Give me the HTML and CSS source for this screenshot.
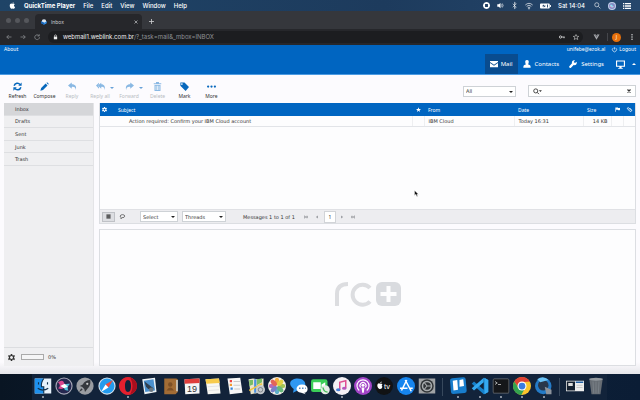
FILE: index.html
```html
<!DOCTYPE html>
<html lang="en">
<head>
<meta charset="utf-8">
<title>Inbox</title>
<link rel="stylesheet" href="styles.css">
</head>
<body>
<header class="menubar">
  <svg class="apple" viewBox="0 0 24 24"><path d="M17 13c0-3 2-4 3-5-1.500-2-3.500-2.500-5-2.500S13 6.500 12 6.500 9.500 5.500 8 5.500C5 5.500 2.500 8 2.500 12.500S6 23 8.500 23c1.500 0 2-1 3.800-1s2.200 1 3.700 1c2.500 0 4-3.500 5-6-2.500-1-4-2.500-4-4zM15.500 1c-2 .3-4 2-3.700 4.500C14 5.500 15.800 3.500 15.500 1z"/></svg>
  <nav class="menus"><b>QuickTime Player</b><span>File</span><span>Edit</span><span>View</span><span>Window</span><span>Help</span></nav>
  <div class="status">
    <svg viewBox="0 0 24 24"><path fill-rule="evenodd" d="M12 0a12 12 0 1 0 .01 0zM8 7h8q1 0 1 1v8q0 1-1 1H8q-1 0-1-1V8q0-1 1-1z"/></svg>
    <svg viewBox="0 0 24 24"><path d="M1 8h5l6-5v18l-6-5H1z"/><path class="line" d="M15 8q3 4 0 8M18 5q6 7 0 14"/></svg>
    <svg viewBox="0 0 24 24"><path class="line" d="M6 6l12 12-6 5V1l6 5L6 18"/></svg>
    <svg class="wide" viewBox="0 0 24 24"><path class="line" d="M1 9q11-10 22 0M5 13q7-7 14 0M8.500 17q3.500-3 7 0"/><circle cx="12" cy="20" r="2"/></svg>
    <svg class="battery" viewBox="0 0 36 24"><path fill-rule="evenodd" d="M3 4h26q3 0 3 3v10q0 3-3 3H3q-3 0-3-3V7q0-3 3-3zM13 7l-7 6h6v4l8-6h-6zM23 7v10h3V7z"/><path d="M33 9h3v6h-3z"/></svg>
    <time>Sat 14:04</time>
    <svg class="search-glass" viewBox="0 0 24 24"><path class="line" d="M15 15l7 7"/><circle class="line" cx="9.500" cy="9.500" r="7"/></svg>
    <svg class="wide" viewBox="0 0 24 24"><circle cx="12" cy="12" r="12" fill="#c3cfea"/><circle cx="12" cy="12" r="9" fill="#7f8cc4"/><path d="M4 13q5-8 8-2t8-2q-2 9-8 8t-8-4z" fill="#dc9fce"/><path d="M6 9q6-5 10 6-7 2-10-6z" fill="#8de0f1"/></svg>
    <svg class="wide" viewBox="0 0 24 24"><path d="M0 3h4v4H0zM6 3h18v4H6zM0 10h4v4H0zM6 10h18v4H6zM0 17h4v4H0zM6 17h18v4H6z"/></svg>
  </div>
</header>

<div class="tabstrip">
  <div class="lights"><i></i><i></i><i></i></div>
  <div class="tab">
    <svg viewBox="0 0 24 24"><circle cx="12" cy="10" r="9" fill="#dfe7f0"/><path d="M1 9l11 6 11-6v8l-11 6-11-6z" fill="#2f8ce4"/><path d="M1 9l11 6v8L1 17z" fill="#1763b5"/></svg>
    <span>Inbox</span>
    <button class="plain" aria-label="Close tab"><svg viewBox="0 0 24 24"><path class="heavy" d="M3 3l18 18M21 3L3 21"/></svg></button>
  </div>
  <button class="plain new" aria-label="New tab"><svg viewBox="0 0 24 24"><path class="heavy" d="M12 0v24M0 12h24"/></svg></button>
</div>

<div class="urlbar">
  <button class="plain" aria-label="Back"><svg class="dim" viewBox="0 0 24 24"><path class="mid" d="M22 12H3M11 4l-8 8 8 8"/></svg></button>
  <button class="plain" aria-label="Forward"><svg class="dim" viewBox="0 0 24 24"><path class="mid" d="M2 12h19M13 4l8 8-8 8"/></svg></button>
  <button class="plain" aria-label="Reload"><svg class="dim" viewBox="0 0 24 24"><path class="mid" d="M20 7a9.500 9.500 0 1 0 2 6M21 1v7h-7"/></svg></button>
  <div class="address">
    <svg class="lock" viewBox="0 0 24 24"><path d="M4 10h16v13H4z"/><path class="mid" d="M7.500 11V6a4.500 4.500 0 0 1 9 0v5"/></svg>
    <span class="url">webmail1.weblink.com.br<span>/?_task=mail&amp;_mbox=INBOX</span></span>
    <svg viewBox="0 0 24 24"><circle class="mid" cx="6" cy="12" r="4.500"/><path class="mid" d="M11 12h12M20 12v5"/></svg>
    <svg viewBox="0 0 24 24"><path class="line" d="M12 2l3 7 8 .5-6 5 2 7.500-7-4-7 4 2-7.500-6-5L9 9z"/></svg>
  </div>
  <svg class="vue" viewBox="0 0 24 24"><path fill="#a7a9ad" d="M0 2h9l3 5 3-5h9L12 23z"/><path fill="#6d6f75" d="M5 2h4l3 5 3-5h4l-7 12z"/></svg>
  <i class="rule"></i>
  <span class="avatar">J</span>
  <svg class="kebab" viewBox="0 0 24 24"><circle cx="12" cy="3" r="3"/><circle cx="12" cy="12" r="3"/><circle cx="12" cy="21" r="3"/></svg>
</div>

<div class="top">
  <div class="topline"><a href="#">About</a><span class="user">unifebe@ezok.al</span>
    <a href="#" class="logout"><svg viewBox="0 0 24 24"><path class="mid" d="M7 4a10 10 0 1 0 10 0M12 1v11"/></svg>Logout</a></div>
  <nav class="tasks">
    <a class="on" href="#"><svg viewBox="0 0 24 24"><path d="M0 3h24v3l-12 8L0 6z"/><path d="M0 9l12 8 12-8v13H0z"/></svg>Mail</a>
    <a href="#"><svg viewBox="0 0 24 24"><path d="M12 0c5 0 6 4 5 8-.5 2-1.500 4-2 5l6 3q2 1 2 7H1q0-6 2-7l6-3C8 12 7 10 7 8c-1-4 0-8 5-8z"/></svg>Contacts</a>
    <a href="#"><svg viewBox="0 0 24 24"><path d="M23 5l-5 4-4-3 4-5c-6-2-11 3-9 9L1 19q-2 2 1 4t4 0l8-8c6 2 11-4 9-10z"/></svg>Settings</a>
    <a href="#" class="screen" aria-label="Screen"><svg viewBox="0 0 24 24"><path fill-rule="evenodd" d="M0 1h24v17H15v3h3v2H6v-2h3v-3H0zM3 4v11h18V4z"/></svg></a>
    <button class="plain up" aria-label="Collapse"></button>
  </nav>
</div>

<main class="mail">
  <div class="toolbar">
    <div class="tools">
      <button class="tool w27"><svg viewBox="0 0 24 24"><path class="heavy" d="M3 10a9 9 0 0 1 16-3M21 14a9 9 0 0 1-16 3"/><path d="M23 1v9h-9zM1 23v-9h9z"/></svg>Refresh</button>
      <button class="tool w27"><svg viewBox="0 0 24 24"><path d="M15 4l5 5L8 21l-7 2 2-7zM17 2q2-2 4 0l1 1q2 2 0 4z"/></svg>Compose</button>
      <button class="tool w28" disabled><svg viewBox="0 0 24 24"><path d="M10 1v5c10 0 13 6 11 15-1-6-4-9-11-8v5L0 9z"/></svg>Reply</button>
      <button class="tool w28" disabled><svg viewBox="0 0 24 24"><path d="M14 2v4c8 0 11 6 9 15-1-6-3-9-9-8v5L5 9z"/><path d="M8 2v4L5 9l3 4v5L0 9z"/></svg>Reply all</button>
      <i class="drop"></i>
      <button class="tool w28" disabled><svg viewBox="0 0 24 24"><path d="M14 1v5C4 6 1 12 3 21c1-6 4-9 11-8v5l10-9z"/></svg>Forward</button>
      <i class="drop"></i>
      <button class="tool w27" disabled><svg viewBox="0 0 24 24"><path fill-rule="evenodd" d="M2 3h6V0h8v3h6v3H2zM4 8h16v16H4zM7 10v11h2V10zm4 0v11h2V10zm4 0v11h2V10z"/></svg>Delete</button>
      <button class="tool w27"><svg viewBox="0 0 24 24"><path fill-rule="evenodd" d="M1 1h11l12 12-9 11L1 10zM5 3.500a2 2 0 1 0 .01 0z"/></svg>Mark</button>
      <button class="tool w27"><svg viewBox="0 0 24 24"><circle cx="3" cy="12" r="3"/><circle cx="12" cy="12" r="3"/><circle cx="21" cy="12" r="3"/></svg>More</button>
    </div>
    <span class="pick filter"><select aria-label="Filter"><option>All</option></select></span>
    <form class="search">
      <svg viewBox="0 0 30 24"><circle class="mid" cx="9" cy="10" r="7"/><path class="mid" d="M14 15l6 6"/><path d="M20 8h10l-5 6z"/></svg>
      <input type="text" aria-label="Search">
      <button type="button" class="plain" aria-label="Clear"><svg viewBox="0 0 24 24"><path class="bold" d="M3 3l18 18M21 3L3 21"/></svg></button>
    </form>
  </div>

  <div class="panes">
    <aside class="folders">
      <nav><a class="on" href="#">Inbox</a><a href="#">Drafts</a><a href="#">Sent</a><a href="#">Junk</a><a href="#">Trash</a></nav>
      <div class="quota">
        <svg viewBox="0 0 24 24"><path fill-rule="evenodd" d="M9.500 0h5l.5 4 3 1 3-2 3 4-3 3v4l3 3-3 4-3-2-3 1-.5 4h-5L9 20l-3-1-3 2-3-4 3-3v-4L0 7l3-4 3 2 3-1zM12 7a5 5 0 1 0 .01 0z"/></svg>
        <i></i><span>0%</span>
      </div>
    </aside>

    <section class="content">
      <div class="list">
        <table>
          <colgroup><col class="c-gear"><col><col class="c-icon"><col class="c-from"><col class="c-date"><col class="c-size"><col class="c-icon"><col class="c-icon"></colgroup>
          <thead><tr>
            <th><svg viewBox="0 0 24 24"><path fill-rule="evenodd" d="M9.500 0h5l.5 4 3 1 3-2 3 4-3 3v4l3 3-3 4-3-2-3 1-.5 4h-5L9 20l-3-1-3 2-3-4 3-3v-4L0 7l3-4 3 2 3-1zM12 8a4 4 0 1 0 .01 0z"/></svg></th>
            <th>Subject</th>
            <th><svg viewBox="0 0 24 24"><path d="M12 1l3 8 9 .5-7 5.500 2.500 8.500L12 18.500 4.500 23.500 7 15 0 9.500 9 9z"/></svg></th>
            <th>From</th><th>Date</th><th>Size</th>
            <th><svg viewBox="0 0 24 24"><path d="M1 2h3v21H1zM5 3q5-3 9 0t10 0v11q-5 3-10 0t-9 0z"/></svg></th>
            <th><svg viewBox="0 0 24 24"><path class="heavy" d="M19 16L8 4Q5 1 3 4t0 5l10 11q5 4 8 0t0-7l-8-8"/></svg></th>
          </tr></thead>
          <tbody><tr><td></td><td class="subject">Action required: Confirm your IBM Cloud account</td><td></td><td>IBM Cloud</td><td>Today 16:31</td><td class="size">14 KB</td><td></td><td></td></tr></tbody>
        </table>
        <div class="listfoot">
          <button class="view on" aria-label="List view"><svg viewBox="0 0 24 24"><path d="M2 2h20v5H2zM2 8h20v3H2zM2 12h20v4H2zM2 17h20v4H2z"/></svg></button>
          <button class="view" aria-label="Threads view"><svg viewBox="0 0 24 24"><path class="mid" d="M8 18l-3 5v-6Q1 15 1 10q1-7 11-7t11 7q0 8-15 8z"/></svg></button>
          <span class="pick sel"><select aria-label="Select"><option>Select</option></select></span>
          <span class="pick thr"><select aria-label="Threads"><option>Threads</option></select></span>
          <span class="count">Messages 1 to 1 of 1</span>
          <button class="plain page" aria-label="First page"><svg viewBox="0 0 24 24"><path d="M2 3h4v18H2zM14 3v18l-8-9zM22 3v18l-8-9z"/></svg></button>
          <button class="plain page" aria-label="Previous page"><svg viewBox="0 0 24 24"><path d="M17 3v18L6 12z"/></svg></button>
          <input class="pageno" type="text" value="1" aria-label="Page">
          <button class="plain page" aria-label="Next page"><svg viewBox="0 0 24 24"><path d="M7 3v18l11-9z"/></svg></button>
          <button class="plain page" aria-label="Last page"><svg viewBox="0 0 24 24"><path d="M18 3h4v18h-4zM10 3v18l8-9zM2 3v18l8-9z"/></svg></button>
        </div>
      </div>
      <div class="preview">
        <svg viewBox="0 0 66 26"><path d="M2 25V13Q2 3 13 3M35 7A10 10 0 1 0 35 20.500" fill="none" stroke="#dcdde0" stroke-width="4"/><rect x="41" y="1" width="25" height="24" rx="6" fill="#d9dbdf"/><path d="M53.500 5v16M45.500 13h16" stroke="#fdfdfe" stroke-width="4"/></svg>
      </div>
    </section>
  </div>
</main>

<footer class="desktop">
  <div class="dock">
    <span class="run"><svg viewBox="0 0 24 24"><path fill="#e7f1fa" d="M1 2h22v20H1z"/><path fill="#1e91ee" d="M1 2h12q-4 6-3 11h3v9H1z"/><path fill="none" stroke="#12314c" stroke-width="1.500" d="M6 7v3M18 7v3M5 15q7 5 14 0M13 2q-4 6-3 11h3v9"/></svg></span>
    <span><svg viewBox="0 0 24 24"><circle cx="12" cy="12" r="11.500" fill="#a8a9b8"/><circle cx="12" cy="12" r="10" fill="#262850"/><path fill="#d9478e" d="M4 7q8-6 9 5-2 6-9 3 5-3 0-8z"/><path fill="#54c5dd" d="M20 9q-8-1-8 4 0 6 6 5-3-4 2-9z"/><path fill="#fff" d="M7 12l6-3 4 4-5 2z"/></svg></span>
    <span><svg viewBox="0 0 24 24"><circle cx="12" cy="12" r="11.500" fill="#9a9da2"/><path fill="#35383d" d="M19 4q-7 0-10 6l-4 2 3 1 3 3 1 4 3-4q5-4 4-12zM7 15l-3 5 5-3z"/><circle cx="15" cy="9" r="1.500" fill="#ccc"/></svg></span>
    <span><svg viewBox="0 0 24 24"><circle cx="12" cy="12" r="11.500" fill="#d5e1eb"/><circle cx="12" cy="12" r="10" fill="#239bed"/><path fill="#f04b3a" d="M20 4l-6 10-4-4z"/><path fill="#fff" d="M4 20l6-10 4 4z"/></svg></span>
    <span class="run"><svg viewBox="0 0 24 24"><path fill="#e5202e" fill-rule="evenodd" d="M12 0a12 12 0 1 0 .01 0zM12 4c3 0 4 4 4 8s-1 8-4 8-4-4-4-8 1-8 4-8z"/><path fill="#a80f1e" d="M15 1c12 3 12 19 0 22q6-11 0-22z"/></svg></span>
    <span><svg viewBox="0 0 24 24"><path fill="#eef3f6" d="M3 3l17-2 2 19-16 3z"/><path fill="#4b90ce" d="M5 5l13-2 2 15-13 2z"/><path fill="#314050" d="M6 6l12 9-1 2-6-1-3-3z"/><circle cx="15" cy="17" r="3" fill="#6a7681"/></svg></span>
    <span><svg viewBox="0 0 24 24"><path fill="#a26c35" d="M3 2h16l2 1v17l-3 3H3z"/><path fill="#d3d8d8" d="M19 4h2v15h-2z"/><circle cx="11" cy="10" r="3" fill="#7d4f25"/><path fill="#7d4f25" d="M6 18q5-8 10 0z"/></svg></span>
    <span><svg viewBox="0 0 24 24"><path fill="#f6f6f6" d="M2 3l20-1v20L3 23z"/><path fill="#df3e3b" d="M2 3l20-1v6L2 9z"/><text x="12" y="20" text-anchor="middle" font-size="12" fill="#333">19</text></svg></span>
    <span><svg viewBox="0 0 24 24"><path fill="#f8f8f3" d="M2 3l18-1 2 20-17 1z"/><path fill="#f7cb4b" d="M2 3l18-1 1 6L3 9z"/><path stroke="#ddd" d="M5 13l15-1M6 18l14-1"/></svg></span>
    <span><svg viewBox="0 0 24 24"><path fill="#f7f7f7" d="M2 2l17-1 3 20-17 2z"/><path fill="#e44" d="M5 4h3v3H5z"/><path fill="#f29b2f" d="M5 9h3v3H5z"/><path fill="#3584d8" d="M6 14h3v3H6z"/><path stroke="#bbb" d="M10 6h9M10 11h9M11 16h8"/></svg></span>
    <span><svg viewBox="0 0 24 24"><path fill="#e9e4cc" d="M2 3l6-1 7 1 7-1v18l-17 3z"/><path fill="#79bd66" d="M3 4h5v6l-5 2zM13 3l7-1v5l-7 4z"/><path stroke="#4b91df" stroke-width="3" d="M11 3v18"/><path stroke="#f3c443" stroke-width="2" d="M3 18L20 9"/><circle cx="18" cy="17" r="6" fill="#c5c9cd"/><circle cx="18" cy="17" r="3" fill="none" stroke="#6b7177"/></svg></span>
    <span><svg viewBox="0 0 24 24"><circle cx="12" cy="12" r="12" fill="#f4f0e9"/><g opacity=".9"><ellipse cx="12" cy="6" rx="3" ry="5" fill="#f5a52a"/><ellipse cx="12" cy="18" rx="3" ry="5" fill="#4fa9c7"/><ellipse cx="6" cy="12" rx="5" ry="3" fill="#b45cb0"/><ellipse cx="18" cy="12" rx="5" ry="3" fill="#9bc045"/><g transform="rotate(45 12 12)"><ellipse cx="12" cy="6" rx="3" ry="5" fill="#e1ce34"/><ellipse cx="12" cy="18" rx="3" ry="5" fill="#6d76c4"/><ellipse cx="6" cy="12" rx="5" ry="3" fill="#e25748"/><ellipse cx="18" cy="12" rx="5" ry="3" fill="#58b170"/></g></g></svg></span>
    <span><svg viewBox="0 0 24 24"><path fill="#2f98f2" d="M10 2c14 0 14 16 0 16l-6 3 1-5C-4 9 1 2 10 2z"/><path fill="#fff" d="M16 10c10 0 9 11 3 11l2 2-6-2c-9-1-8-11 1-11z"/><path stroke="#538abf" stroke-width="2" d="M12 15h2M16 15h2M20 15h1"/></svg></span>
    <span><svg viewBox="0 0 24 24"><rect y="3" width="22" height="17" rx="3" fill="#3bce58"/><path fill="#fff" d="M3 7h10v9H3zM14 10l5-3v8l-5-2z"/><circle cx="19" cy="17" r="6" fill="#e5ebe6"/><path fill="none" stroke="#45bc5b" stroke-width="2" d="M16 14q1 6 6 6"/></svg></span>
    <span class="run"><svg viewBox="0 0 24 24"><circle cx="12" cy="12" r="12" fill="#f4f1f5"/><path fill="none" stroke="#df4e91" stroke-width="2" d="M9 17V7l8-2v10"/><ellipse cx="7" cy="17" rx="3" ry="2" fill="#497fd7"/><ellipse cx="15" cy="15" rx="3" ry="2" fill="#b556bf"/></svg></span>
    <span><svg viewBox="0 0 24 24"><circle cx="12" cy="12" r="12" fill="#a345c8"/><g fill="none" stroke="#fff" stroke-width="1.500"><path d="M7 18a8 8 0 1 1 10 0M9 14a4 4 0 1 1 6 0"/></g><circle cx="12" cy="11" r="2" fill="#fff"/><path fill="#fff" d="M10 14h4l-1 7h-2z"/></svg></span>
    <span><svg viewBox="0 0 24 24"><circle cx="12" cy="12" r="12" fill="#111214"/><path fill="#fff" d="M9 12q0-2 1-2-2-2-3-1-4-2-4 3 1 4 3 4h1q2 0 3-3zM7 8q0-2 2-2 0 2-2 2z"/><text x="16" y="16" text-anchor="middle" font-size="10" fill="#fff">tv</text></svg></span>
    <span><svg viewBox="0 0 24 24"><circle cx="12" cy="12" r="12" fill="#1685ef"/><path fill="none" stroke="#fff" stroke-width="2" d="M13 4L6 18M11 4l8 15M4 15h10M17 15h4"/></svg></span>
    <span><svg viewBox="0 0 24 24"><path fill="#a0a3a5" d="M1 2h22v20H1z"/><circle cx="12" cy="12" r="9" fill="#303437"/><circle cx="12" cy="12" r="6" fill="none" stroke="#a7abad" stroke-width="2"/><path stroke="#a7abad" stroke-width="1.500" d="M12 12h6M12 12l-4-5M12 12l-4 5"/></svg></span>
    <i></i>
    <span class="run"><svg viewBox="0 0 24 24"><rect x="2" y="1" width="21" height="21" rx="3" fill="#187dcc" transform="rotate(-5 12 12)"/><path fill="#fff" d="M5 5l6-1 1 13-6 1zM14 4l5-1 1 9-6 1z"/></svg></span>
    <span class="run"><svg viewBox="0 0 24 24"><path fill="#1680ca" d="M17 1l6 3v16l-6 3L1 9l3-3 13 11z"/><path fill="#35a9f1" d="M17 1v6L4 18l-3-3zM18 1l5 3v16l-5 3z"/></svg></span>
    <span class="run"><svg viewBox="0 0 24 24"><rect x="1" y="2" width="22" height="20" rx="2" fill="#6d7074"/><path fill="#15171a" d="M2 3h20v18H2z"/><path fill="none" stroke="#d4d5d6" d="M4 6l3 2-3 2M8 10h4"/></svg></span>
    <span class="run"><svg viewBox="0 0 24 24"><circle cx="12" cy="12" r="12" fill="#fbc42d"/><path fill="#df4234" d="M1.600 6A12 12 0 0 1 22.400 6L12 7 8 15z"/><path fill="#34a34f" d="M1.600 6A12 12 0 0 0 11 24l5-9H8z"/><circle cx="12" cy="12" r="6" fill="#fff"/><circle cx="12" cy="12" r="4.500" fill="#3b7be1"/></svg></span>
    <span class="run"><svg viewBox="0 0 24 24"><circle cx="11" cy="12" r="11" fill="#247bc7"/><circle cx="11" cy="11" r="7" fill="#28374b"/><path fill="#6bc2f5" d="M3 3q8-6 15 1L7 7z"/><path fill="#8c939c" d="M13 13l9 4v6h-7z"/></svg></span>
    <i></i>
    <span><svg viewBox="0 0 24 24"><path fill="#eee" d="M0 5h24v14H0z"/><path fill="#15202f" d="M1 6h11v12H1z"/><path fill="#ddd" d="M3 8h6v4H3z"/><path fill="#2361a5" d="M13 6h10v2H13z"/><path stroke="#bbb" d="M14 11h8M14 14h8"/></svg></span>
    <span><svg viewBox="0 0 24 24"><path fill="#666c73" d="M3 2h18l-3 21H6z"/><ellipse cx="12" cy="3" rx="9" ry="2" fill="#949a9f"/><path stroke="#7e858c" d="M8 6l1 16M12 6v16M16 6l-1 16"/></svg></span>
  </div>
</footer>
<svg class="pointer" viewBox="0 0 12 18"><path d="M1 1v13l3-3 3 6 2-1-2-5h4z" fill="#111" stroke="#fff"/></svg>
</body>
</html>
```
FILE: styles.css
```css
* { box-sizing: border-box; }
body {
  margin: 0; min-height: 100vh; display: flex; flex-direction: column;
  font: 5px/8px "Noto Sans", sans-serif; color: #333; background: #fcfcfe;
}
svg { display: block; flex: none; width: 7px; height: 7px; fill: currentColor; overflow: visible; }
.line { fill: none; stroke: currentColor; stroke-width: 2; }
.mid { fill: none; stroke: currentColor; stroke-width: 3; }
.heavy { fill: none; stroke: currentColor; stroke-width: 4; }
.bold { fill: none; stroke: currentColor; stroke-width: 7; }
a { color: inherit; text-decoration: none; }
button, select, input { font: inherit; color: inherit; margin: 0; padding: 0; border: 0; background: none; }
.plain { display: flex; align-items: center; justify-content: center; }

/* macOS menu bar */
.menubar {
  height: 11px; padding: 0 9px; display: flex; align-items: center;
  font: 6px/10px Inter, sans-serif; color: #fff; background: linear-gradient(90deg, #1f4467, #1d3b5d 60%, #26476c);
}
.apple { width: 7px; height: 7px; }
.menus { display: flex; gap: 8px; margin-left: 8px; }
.menus span, .status time { font-weight: 500; }
.status { display: flex; align-items: center; gap: 7px; margin-left: auto; }
.status .wide { width: 8px; height: 8px; }
.status .battery { width: 11px; height: 8px; }
.status .search-glass { margin-left: 2px; }

/* Browser chrome */
.tabstrip { height: 18px; display: flex; align-items: flex-end; background: #35373c; color: #c9cacd; }
.lights { display: flex; gap: 4px; padding: 0 6px; align-self: center; }
.lights i { width: 5px; height: 5px; border-radius: 50%; background: #55575c; }
.tab {
  width: 107px; height: 15px; padding: 0 4px 0 6px; display: flex; align-items: center; gap: 4px;
  font: 5px/8px Inter, sans-serif; background: #26272b; border-radius: 4px 4px 0 0;
}
.tab span { flex: 1; }
.tab svg { width: 6px; height: 6px; }
.tab .plain svg { width: 4px; height: 4px; }
.new { width: 18px; height: 15px; }
.new svg { width: 5px; height: 5px; }
.urlbar { height: 16px; padding: 0 6px; display: flex; align-items: center; gap: 8px; background: #26272b; color: #d5d6d8; }
.urlbar svg { width: 6px; height: 6px; }
.urlbar .dim { color: #8b8d91; }
.address {
  flex: 1; height: 12px; padding: 0 4px 0 5px; display: flex; align-items: center; gap: 8px;
  border-radius: 6px; background: #1c1d20; font: 6px/8px Inter, sans-serif; color: #eee;
}
.address .lock { width: 5px; margin-right: -3px; }
.url { flex: 1; }
.url span { color: #8f9195; }
.urlbar .vue { width: 7px; margin-left: 2px; }
.rule { width: 1px; height: 8px; margin: 0 -4px 0 -1px; background: #45464b; }
.avatar { width: 9px; height: 9px; border-radius: 50%; background: #e8710a; color: #fff; text-align: center; line-height: 9px; }
.kebab { margin-right: -1px; }

/* Webmail header */
.top { background: #0065c1; color: #fff; border-bottom: 1px solid #4c9be2; }
.topline { display: flex; height: 9px; padding: 0 4px; line-height: 9px; }
.user { margin-left: auto; }
.logout { display: flex; align-items: center; gap: 2px; margin-left: 7px; }
.logout svg { width: 5px; height: 5px; }
.tasks { display: flex; justify-content: flex-end; padding-right: 4px; font-size: 6px; }
.tasks a { display: flex; align-items: center; gap: 4px; height: 20px; padding: 0 5px; }
.tasks a svg { width: 8px; height: 8px; }
.tasks .on { background: #094c8f; gap: 3px; }
.tasks .screen { padding: 0 7px; }
.tasks .screen svg { width: 9px; height: 9px; }
.up { width: 4px; height: 20px; }
.up::before { content: ""; border: 2px solid transparent; border-top: 0; border-bottom-color: #fff; }

/* Toolbar */
.mail { flex: 1; display: flex; flex-direction: column; padding: 0 4px 8px; background: linear-gradient(#fcfbfe 96%, #e6e6ea); }
.toolbar { height: 28px; display: flex; align-items: center; padding-top: 4px; }
.tools { flex: 1; display: flex; align-items: center; }
.tool { display: flex; flex-direction: column; align-items: center; gap: 1px; white-space: nowrap; }
.tool svg { width: 9px; height: 9px; color: #0768bc; }
.tool:disabled { color: #b8bcc2; }
.tool:disabled svg { color: #89b8e3; }
.w28 { width: 28px; }
.w27 { width: 27px; }
.drop { border: 2px solid transparent; border-top-color: #68a2d8; border-bottom: 0; margin: 0 1px 6px -4px; }
.pick { position: relative; display: block; height: 11px; border: 1px solid #ced2d6; background: #fff; }
.pick select { display: block; width: 100%; height: 100%; padding: 0 2px; appearance: none; }
.pick::after { content: ""; position: absolute; right: 2px; top: 4px; border: 2px solid transparent; border-top-color: #222; border-bottom: 0; }
.filter { width: 53px; }
.search { width: 108px; height: 12px; margin-left: 12px; padding: 0 4px; display: flex; align-items: center; border: 1px solid #ced2d6; background: #fff; }
.search svg { width: 9px; }
.search input { flex: 1; min-width: 0; }
.search .plain svg { width: 4px; height: 4px; }

/* Folder list */
.panes { flex: 1; display: flex; gap: 5px; }
.folders, td, .pick, .count { font-family: "DejaVu Sans", sans-serif; }
.folders { width: 90px; display: flex; flex-direction: column; background: #efeff1; border-right: 1px solid #e4e4e7; }
.folders nav { display: grid; grid-auto-rows: 1fr; height: 63px; }
.folders nav a { display: flex; align-items: center; padding-left: 11px; border-bottom: 1px solid #dedfe2; }
.folders nav .on { background: #d5d6d9; }
.quota { height: 19px; margin-top: auto; padding: 0 4px; display: flex; align-items: center; gap: 6px; border-top: 1px solid #dcdde0; }
.quota i { width: 23px; height: 6px; border: 1px solid #aaa; background: #f5f5f6; }
.quota span { margin-left: -2px; }

/* Message list */
.content { flex: 1; display: flex; flex-direction: column; gap: 5px; }
.list { height: 121px; display: flex; flex-direction: column; border: 1px solid #dcdee2; border-top: 0; background: #fdfdfe; }
table { width: 100%; table-layout: fixed; border-collapse: collapse; }
th, td { padding: 0 4px; font-weight: 400; text-align: left; white-space: nowrap; }
th { height: 13px; color: #fff; background: #0065c1; }
th:first-child { padding: 0 2px; }
th svg { width: 5px; height: 5px; }
td { height: 10px; border-right: 1px solid #eeeff1; border-bottom: 1px solid #e2e4e8; }
td:first-child, td:last-child { border-right: 0; }
th:nth-child(2) { padding-left: 6px; }
td.subject { padding-left: 17px; }
td.size { text-align: right; padding-right: 3px; }
.c-gear { width: 12px; }
.c-icon { width: 12px; }
.c-from { width: 90px; }
.c-date { width: 69px; }
.c-size { width: 28px; }
.listfoot { height: 14px; margin-top: auto; padding: 0 2px; display: flex; align-items: center; background: #ededf0; border-top: 1px solid #e0e1e5; }
.view { width: 13px; height: 10px; display: flex; align-items: center; justify-content: center; border: 1px solid transparent; margin-right: 1px; }
.view.on { background: #dddee2; border-color: #bfc1c6; }
.view svg { width: 5px; height: 5px; }
.sel { width: 38px; margin-left: 10px; }
.thr { width: 44px; margin-left: 4px; }
.count { margin: 0 6px 0 17px; }
.page { width: 11px; height: 10px; color: #8d8f94; }
.page svg { width: 4px; height: 4px; }
.pageno { width: 12px; height: 12px; margin: 0 1px; border: 1px solid #d2d4d8; background: #fff; text-align: center; }
.preview { flex: 1; display: flex; align-items: center; justify-content: center; border: 1px solid #dcdee2; background: #fdfdfe; }
.preview svg { width: 66px; height: 26px; margin-bottom: 8px; }

/* Dock */
.desktop { height: 26px; padding: 0 33px 0 32px; background: linear-gradient(90deg, #091523, #10233a 50%, #0b1d35); }
.dock { height: 26px; display: grid; grid-template-columns: repeat(19, 1fr) 10px repeat(5, 1fr) 10px repeat(2, 1fr); background: #12233a; }
.dock span { display: flex; flex-direction: column; align-items: center; padding-top: 3px; gap: 1px; font-family: "Liberation Sans", sans-serif; }
.dock svg { width: 18px; height: 18px; }
.dock .run::after { content: ""; width: 2px; height: 2px; border-radius: 50%; background: #aeb6c0; }
.dock i { width: 1px; height: 18px; margin: 4px auto; background: #37485c; }

.pointer { position: absolute; left: 414px; top: 190px; width: 5px; height: 7px; }
```
